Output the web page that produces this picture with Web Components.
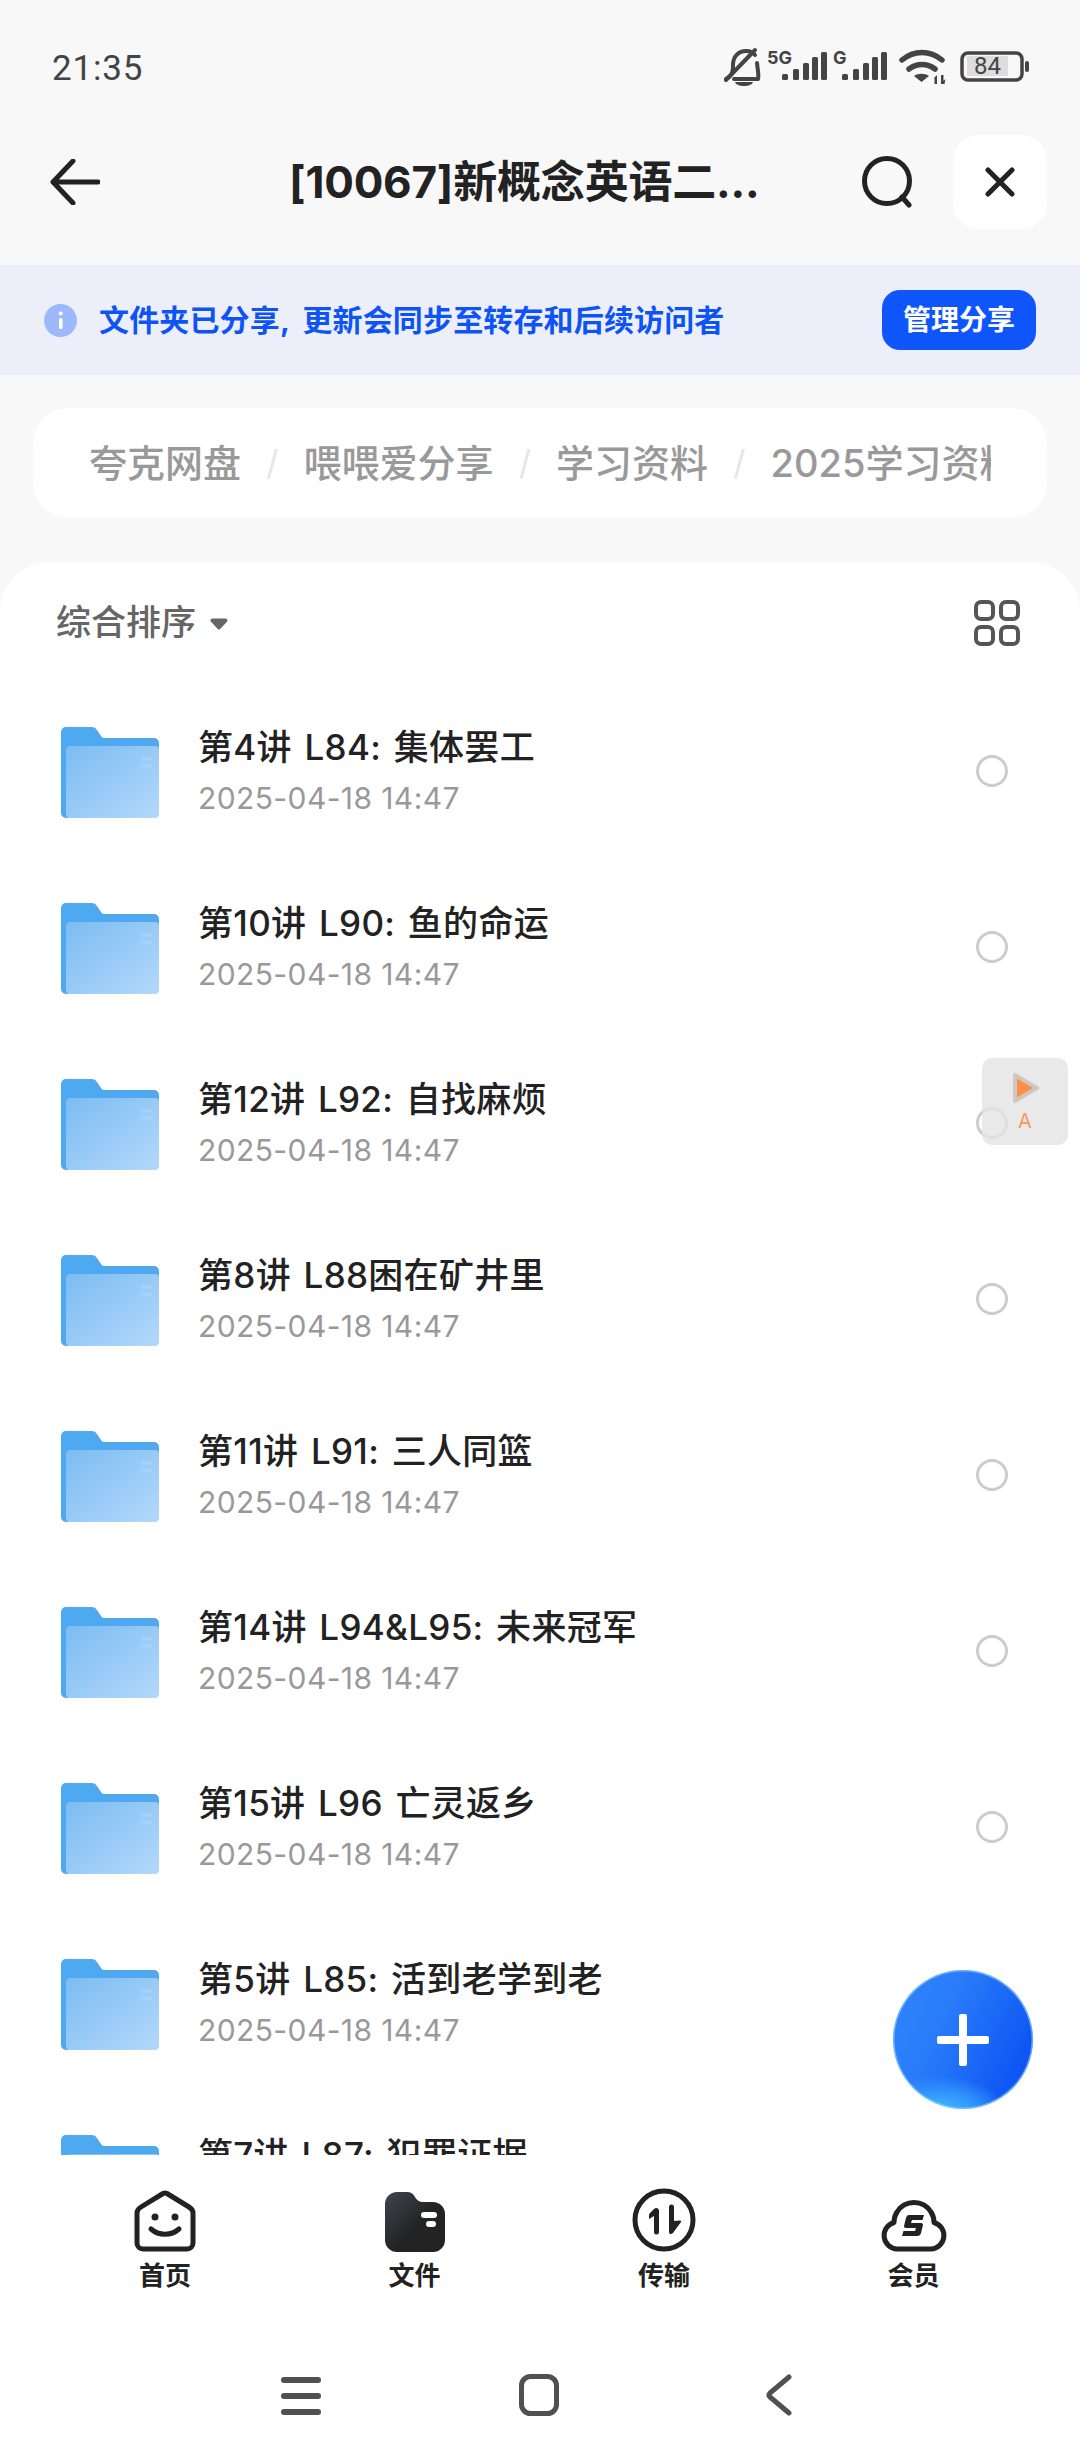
<!DOCTYPE html>
<html lang="zh"><head><meta charset="utf-8"><title>文件</title>
<style>
html,body{margin:0;padding:0;background:#f8f8f8}
body{width:1080px;height:2460px;overflow:hidden;font-family:Inter,"Noto Sans CJK SC",sans-serif}
app-shell{width:1080px;height:2460px}
</style></head><body>
<app-shell>
  <status-bar></status-bar>
  <top-bar title="[10067]新概念英语二..."></top-bar>
  <share-banner></share-banner>
  <bread-crumbs></bread-crumbs>
  <file-sheet>
    <file-row name="第4讲 L84: 集体罢工"></file-row>
    <file-row name="第10讲 L90: 鱼的命运"></file-row>
    <file-row name="第12讲 L92: 自找麻烦"></file-row>
    <file-row name="第8讲 L88困在矿井里"></file-row>
    <file-row name="第11讲 L91: 三人同篮"></file-row>
    <file-row name="第14讲 L94&amp;L95: 未来冠军"></file-row>
    <file-row name="第15讲 L96 亡灵返乡"></file-row>
    <file-row name="第5讲 L85: 活到老学到老"></file-row>
    <file-row name="第7讲 L87: 犯罪证据"></file-row>
  </file-sheet>
  <tab-bar></tab-bar>
  <nav-bar></nav-bar>
  <float-widget></float-widget>
  <fab-button></fab-button>
</app-shell>
<script>
const FONT='Inter,"Noto Sans CJK SC",sans-serif';
function def(name,html){
  customElements.define(name,class extends HTMLElement{
    connectedCallback(){
      if(this.shadowRoot)return;
      const r=this.attachShadow({mode:'open'});
      r.innerHTML=typeof html==='function'?html(this):html;
    }
  });
}
def('app-shell',`<style>:host{display:flex;flex-direction:column;position:relative;background:#f8f8f8;overflow:hidden}</style><slot></slot>`);

def('status-bar',`<style>
:host{display:flex;align-items:center;height:117px;box-sizing:border-box;padding:19px 51px 0 52px;flex:none;color:#444}
.t{font:400 35px/1 Roboto,sans-serif;letter-spacing:.8px;flex:1}
svg{display:block}
text{font-family:Inter,sans-serif}
</style>
<span class="t">21:35</span>
<svg width="308" height="44" viewBox="721 48 308 44" fill="#444">
  <g fill="none" stroke="#444" stroke-width="4" stroke-linecap="round" stroke-linejoin="round">
    <path d="M726 81c5-3 7-5 7-14 0-9 6-14 13-14 4 0 7 1 9 4"/>
    <path d="M757 65c1 9 2 13 1 16-12 0-18 0-24 0"/>
    <path d="M726 82 L755 52"/>
  </g>
  <path d="M735 84h18c-1 3-5 4-9 4s-8-1-9-4z"/>
  <text x="767" y="66" font-size="18" font-weight="700">5G</text>
  <g><rect x="782" y="76" width="6" height="6" rx="1.5"/><rect x="793" y="71" width="6" height="11" rx="1.5"/><rect x="803" y="65" width="6" height="17" rx="1.5"/><rect x="812" y="59" width="6" height="23" rx="1.5"/><rect x="821" y="54" width="6" height="28" rx="1.5"/></g>
  <text x="833" y="66" font-size="18" font-weight="700">G</text>
  <g><rect x="842" y="76" width="6" height="6" rx="1.5"/><rect x="853" y="71" width="6" height="11" rx="1.5"/><rect x="863" y="65" width="6" height="17" rx="1.5"/><rect x="872" y="59" width="6" height="23" rx="1.5"/><rect x="881" y="54" width="6" height="28" rx="1.5"/></g>
  <g fill="none" stroke="#444" stroke-width="5.500" stroke-linecap="round">
    <path d="M902 62c12-10 28-10 40 0"/><path d="M909 71c8-6 18-6 26 0"/>
  </g>
  <path d="M914 78c4-3 11-3 15 0l-7.500 6z"/>
  <path d="M934 80l3-3v9h-2.500v-5zM941 77h2.500v6l2-2-1 5h-3.500z"/>
  <rect x="962" y="55" width="60" height="27" rx="6" fill="none" stroke="#444" stroke-width="3.500"/>
  <rect x="967" y="58" width="41" height="20" fill="#ddd"/>
  <rect x="1025" y="63" width="4" height="11" rx="2"/>
  <text x="987.500" y="76" font-size="24" text-anchor="middle" style="font-family:Roboto,sans-serif">84</text>
</svg>`);

def('top-bar',t=>`<style>
:host{display:flex;align-items:center;height:148px;box-sizing:border-box;flex:none;padding:0 33px 18px 50px}
.b{width:50px;height:46px;flex:none}
h1{margin:0 0 0 189px;flex:1;font:700 44px/1 ${FONT};color:#222;text-align:left;white-space:nowrap;letter-spacing:-.2px}
.s{flex:none;margin-right:38px}
.c{width:94px;height:94px;border-radius:26px;background:#fff;display:flex;align-items:center;justify-content:center;flex:none}
svg{display:block}
</style>
<svg class="b" viewBox="0 0 50 46" fill="none" stroke="#222" stroke-width="5" stroke-linecap="round" stroke-linejoin="round"><path d="M23 2 3 23l20 21M3 23h45"/></svg>
<h1>${t.getAttribute('title')}</h1>
<svg class="s" width="54" height="52" viewBox="0 0 54 52" fill="none" stroke="#222" stroke-width="5" stroke-linecap="round"><circle cx="26" cy="25" r="22.500"/><path d="M41 41l7 8"/></svg>
<div class="c"><svg width="30" height="30" viewBox="0 0 30 30" fill="none" stroke="#222" stroke-width="5" stroke-linecap="round"><path d="M3 3l24 24M27 3 3 27"/></svg></div>`);

def('share-banner',`<style>
:host{display:flex;align-items:center;height:110px;flex:none;background:#eceff9;padding:0 44px;box-sizing:border-box}
svg{flex:none;display:block;margin-right:22px}
.t{flex:1;font:700 30px/1 ${FONT};color:#0d53f5;white-space:nowrap;word-spacing:6px;letter-spacing:.15px}
.btn{flex:none;width:154px;height:60px;border-radius:18px;background:#0e56fb;color:#fff;font:700 28px/60px ${FONT};text-align:center}
</style>
<svg width="33" height="33" viewBox="0 0 33 33"><circle cx="16.500" cy="16.500" r="16.500" fill="#9db8fb"/><rect x="15" y="14" width="3.500" height="11" rx="1.500" fill="#fff"/><circle cx="16.700" cy="9.500" r="2" fill="#fff"/></svg>
<span class="t">文件夹已分享, 更新会同步至转存和后续访问者</span>
<span class="btn">管理分享</span>`);

def('bread-crumbs',`<style>
:host{display:block;flex:none;margin:33px 33px 0;height:110px;border-radius:36px;background:#fff;box-sizing:border-box;padding:0 56px}
.in{display:flex;align-items:center;height:100%;overflow:hidden;white-space:nowrap;font:500 38px/1 ${FONT};color:#999}
i{font-style:normal;flex:none;width:62.500px;text-align:center;color:#e6e6e6;font-weight:400;font-size:34px}
span{flex:none}
</style><div class="in"><span>夸克网盘</span><i>/</i><span>喂喂爱分享</span><i>/</i><span>学习资料</span><i>/</i><span>2025学习资料</span></div>`);

def('file-sheet',`<style>
:host{display:flex;flex-direction:column;flex:none;height:1593px;margin-top:44px;background:#fff;border-radius:50px 50px 0 0;overflow:hidden;box-sizing:border-box}
.sort{display:flex;align-items:center;flex:none;height:121px;box-sizing:border-box;padding:0 60px 0 56px;color:#666;font:500 35px/1 ${FONT}}
.sort .g{margin-left:auto}
.list{display:flex;flex-direction:column}
svg{display:block}
</style>
<div class="sort"><span>综合排序</span><svg style="margin-left:14px;margin-top:3px" width="18" height="12" viewBox="0 0 18 12"><path d="M2.500 2.500h13l-6.500 7z" fill="#666" stroke="#666" stroke-width="4" stroke-linejoin="round"/></svg>
<svg class="g" width="46" height="46" viewBox="0 0 46 46" fill="none" stroke="#555" stroke-width="4"><rect x="2" y="2" width="17" height="17" rx="5"/><rect x="27" y="2" width="17" height="17" rx="5"/><rect x="2" y="27" width="17" height="17" rx="5"/><rect x="27" y="27" width="17" height="17" rx="5"/></svg></div>
<div class="list"><slot></slot></div>`);

let fid=0;
def('file-row',t=>{const id='f'+(++fid);return `<style>
:host{display:flex;align-items:center;height:176px;flex:none;box-sizing:border-box;padding:0 72px 0 61px}
svg{display:block;flex:none;margin-top:2px}
.m{flex:1;margin-left:39px;display:flex;flex-direction:column;gap:19px;margin-top:3px}
.n{font:500 35px/32px ${FONT};color:#222;white-space:nowrap;letter-spacing:.3px;word-spacing:3px}
.d{font:400 30px/32px ${FONT};color:#999;white-space:nowrap;letter-spacing:.4px}
.r{flex:none;width:32px;height:32px;border-radius:50%;border:3px solid #ccc;box-sizing:border-box}
</style>
<svg width="98" height="91" viewBox="0 0 98 91"><defs><linearGradient id="${id}" x1="0" y1="0" x2="1" y2="1"><stop offset="0" stop-color="#7cbcf2"/><stop offset="1" stop-color="#b3d8fb"/></linearGradient></defs>
<path d="M0 5a5 5 0 0 1 5-5h26a6 6 0 0 1 5 3l4 6a4 4 0 0 0 3 2h50a5 5 0 0 1 5 5v30H0z" fill="#4fa9f0"/>
<path d="M0 20h8v71H5a5 5 0 0 1-5-5z" fill="#4fa9f0"/>
<rect x="5" y="19" width="93" height="72" rx="4" fill="url(#${id})"/>
<rect x="80" y="30" width="11" height="4" rx="1" fill="#a7d0f7"/><rect x="80" y="37" width="11" height="4" rx="1" fill="#a7d0f7"/></svg>
<div class="m"><span class="n">${t.getAttribute('name').replace('&','&amp;')}</span><span class="d">2025-04-18 14:47</span></div>
<span class="r"></span>`});

def('tab-item',t=>`<style>
:host{display:flex;flex-direction:column;align-items:center;width:120px}
.i{height:64px;display:flex;align-items:flex-end;justify-content:center}
.l{font:700 26px/1 ${FONT};color:#222;margin-top:11px}
</style><div class="i"><slot></slot></div><span class="l">${t.getAttribute('label')}</span>`);

def('tab-bar',`<style>
:host{display:flex;flex:none;height:175px;background:#fff;box-sizing:border-box;padding:33px 0 0 105px;gap:129.500px}
svg{display:block}
</style>
<tab-item label="首页"><svg width="62" height="62" viewBox="0 0 62 62" fill="none" stroke="#222" stroke-width="5" stroke-linejoin="round"><path d="M29 3.500q2-1 4 0L55 17q4 2.500 4 6v30a6 6 0 0 1-6 6H9a6 6 0 0 1-6-6V23q0-3.500 4-6z"/><circle cx="21" cy="27" r="3.500" fill="#222" stroke="none"/><circle cx="41" cy="27" r="3.500" fill="#222" stroke="none"/><path d="M17 39c8 7 20 7 28 0" stroke-linecap="round"/></svg></tab-item>
<tab-item label="文件"><svg width="60" height="60" viewBox="0 0 60 60"><defs><linearGradient id="dk" x1="0" y1="0" x2="1" y2="1"><stop offset="0" stop-color="#3f4650"/><stop offset=".55" stop-color="#232323"/></linearGradient></defs><path d="M0 12A12 12 0 0 1 12 0h10a9 9 0 0 1 8 5 9 9 0 0 0 8 5h10a12 12 0 0 1 12 12v26a12 12 0 0 1-12 12H12A12 12 0 0 1 0 48z" fill="url(#dk)"/><rect x="36" y="20" width="16" height="6" rx="3" fill="#fff"/><rect x="41" y="29" width="10" height="6" rx="3" fill="#fff"/></svg></tab-item>
<tab-item label="传输"><svg width="64" height="64" viewBox="0 0 64 64"><circle cx="32" cy="32" r="29" fill="none" stroke="#222" stroke-width="5"/><path d="M27 44a2.500 2.500 0 0 1-5 0V28l-5 3v-4c0-1 1-2 2-3l3-3c2-2 5-1 5 2zM37 19a2.500 2.500 0 0 1 5 0v14l6-.5c1 0 1.500 1 1 1.500l-8 11c-2 2-4 1-4-1z" fill="#222"/></svg></tab-item>
<tab-item label="会员"><svg width="66" height="56" viewBox="0 0 66 56"><path d="M17 53H16a13.500 13.500 0 0 1-3-26.500C13 22 14 19 16 16A20 20 0 0 1 50 16C52 19 53 22 53 26.500A13.500 13.500 0 0 1 50 53z" fill="none" stroke="#222" stroke-width="5" stroke-linejoin="round"/><path d="M28 19h15l-1.500 5H31l-1 3h10c1.500 0 2 1 2 2l-2 8c-.5 2-2 3-3.500 3H21l1.500-5H34l1-3H25c-1.500 0-2-1-2-2l2-8c.5-2 1.500-3 3-3z" fill="#222"/></svg></tab-item>`);

def('nav-bar',`<style>
:host{display:flex;flex:1;background:#fff;box-sizing:border-box;padding:44px 0 0 281px;align-items:flex-start}
svg{display:block;flex:none}
</style>
<svg width="40" height="38" viewBox="0 0 40 38" fill="#505050" style="margin-top:3px"><rect y="0" width="40" height="6" rx="3"/><rect y="16" width="40" height="6" rx="3"/><rect y="32" width="40" height="6" rx="3"/></svg>
<svg style="margin-left:198px" width="40" height="42" viewBox="0 0 40 42" fill="none" stroke="#505050" stroke-width="5"><rect x="2.500" y="2.500" width="35" height="37" rx="9"/></svg>
<svg style="margin-left:207px" width="26" height="42" viewBox="0 0 26 42" fill="none" stroke="#505050" stroke-width="5" stroke-linecap="round" stroke-linejoin="round"><path d="M23 3 4 19q-2 2 0 4l19 16"/></svg>`);

def('float-widget',`<style>
:host{position:absolute;left:982px;top:1058px;width:86px;height:87px;border-radius:10px;background:rgba(228,228,228,.8);display:flex;flex-direction:column;align-items:center}
svg{display:block;margin-top:14px;margin-left:2px}
span{font:400 20px/1 ${FONT};color:#f59a5c;margin-top:7px}
</style>
<svg width="28" height="32" viewBox="0 0 28 32"><path d="M3 3 25 16 3 29z" fill="#ff8f45" stroke="#cfc8c2" stroke-width="4" stroke-linejoin="round"/></svg><span>A</span>`);

def('fab-button',`<style>
:host{position:absolute;left:893px;top:1970px;width:140px;height:139px;border-radius:50%;
background:radial-gradient(ellipse 50% 28% at 32% 104%,#45c6ff 0,#2f92fb 60%,transparent 100%),linear-gradient(115deg,#2e85fb 0%,#2a7cfa 35%,#0e55f3 85%);
box-shadow:inset 0 0 0 1.500px rgba(150,215,255,.6);display:flex;align-items:center;justify-content:center}
svg{display:block}
</style><svg width="52" height="52" viewBox="0 0 52 52" fill="#fff"><rect x="22" width="8" height="52" rx="2"/><rect y="22" width="52" height="8" rx="2"/></svg>`);
</script>
</body></html>
